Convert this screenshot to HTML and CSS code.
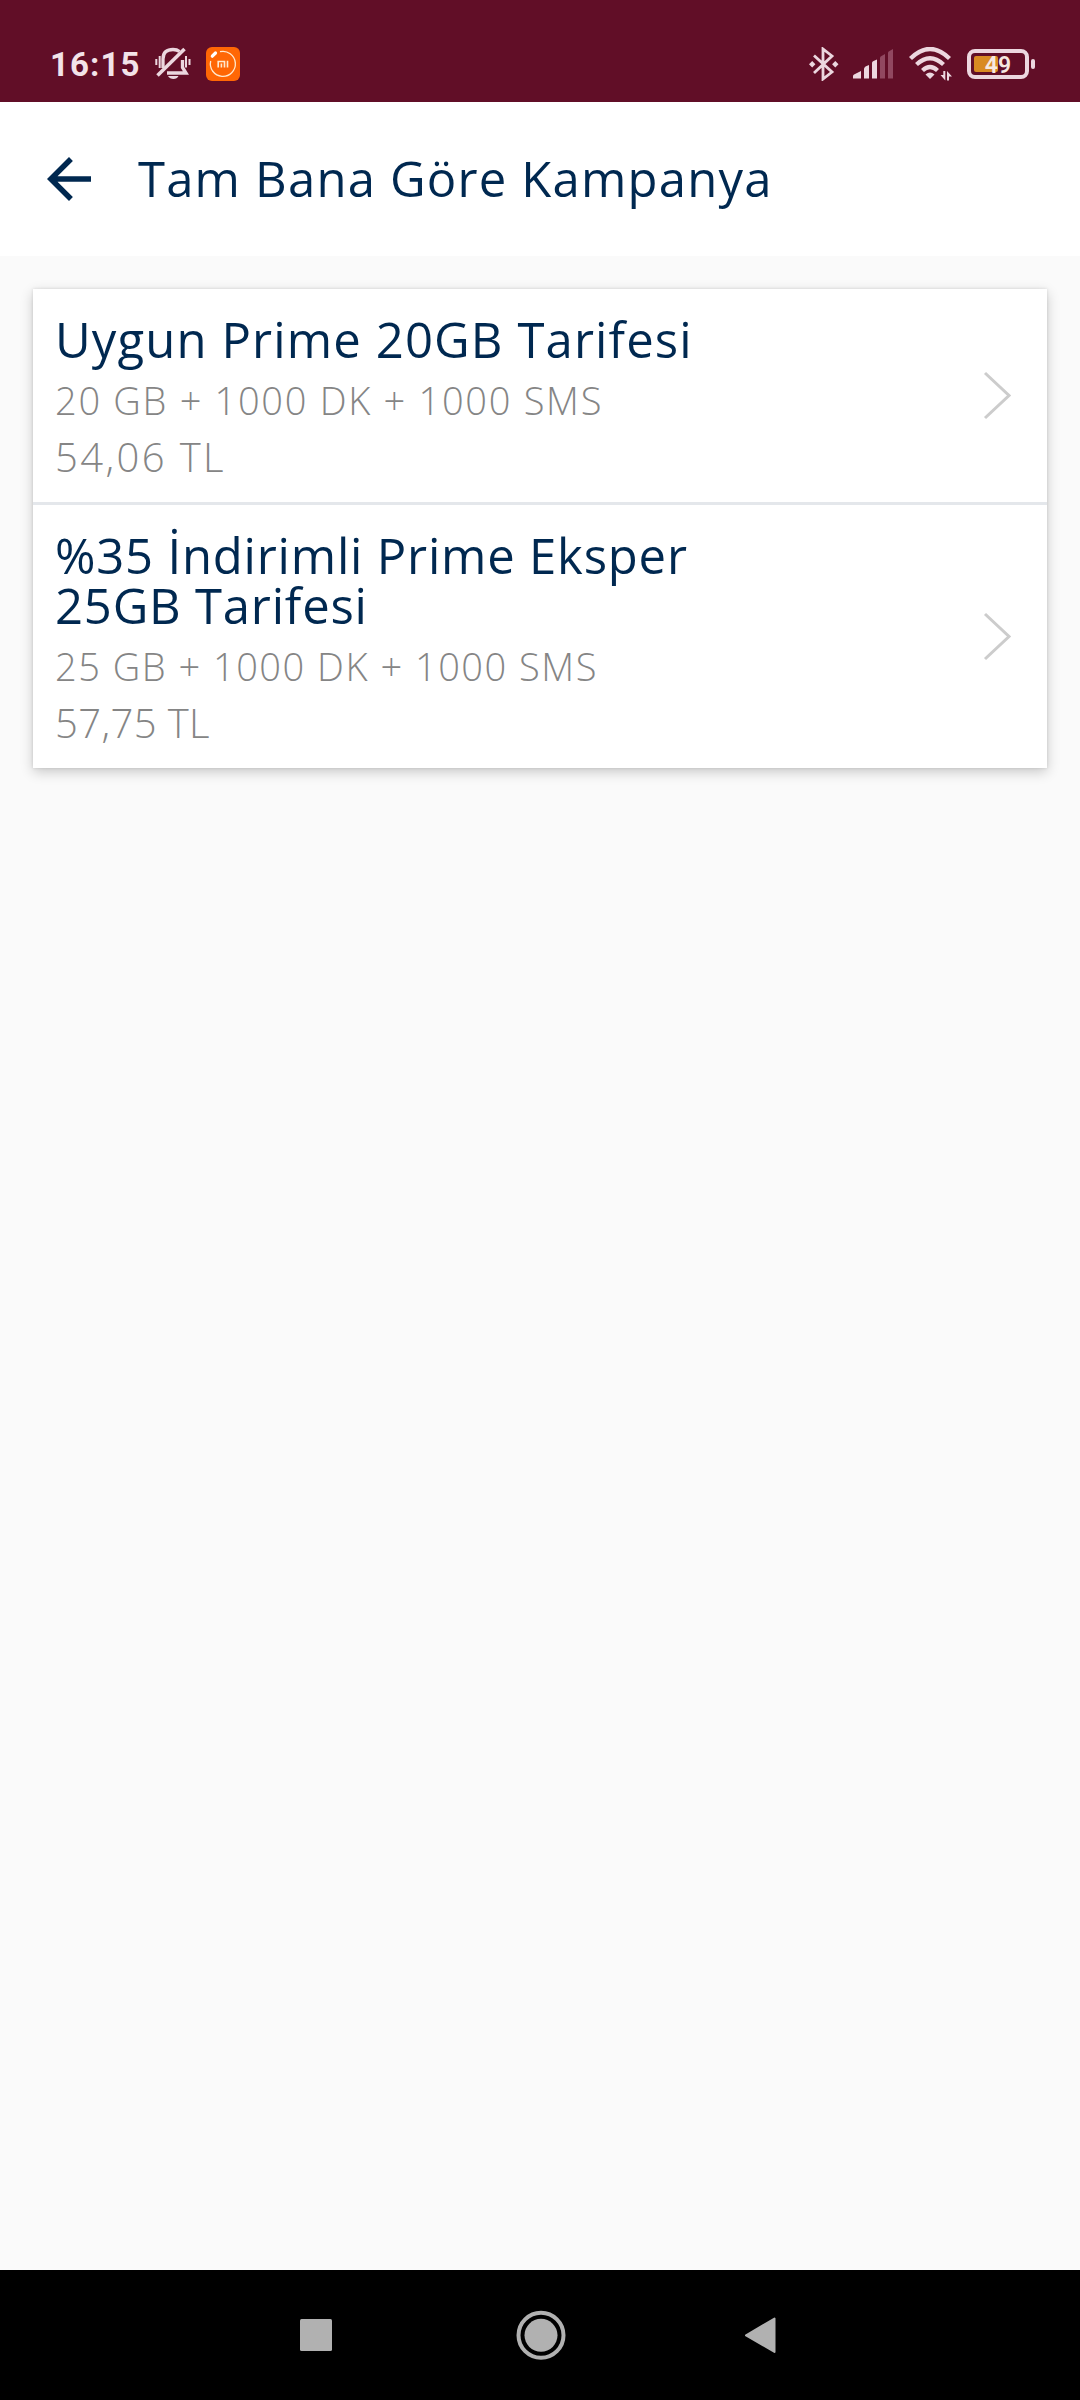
FILE: index.html
```html
<!DOCTYPE html>
<html lang="tr">
<head>
<meta charset="utf-8">
<title>Tam Bana Göre Kampanya</title>
<link rel="stylesheet" href="styles.css">
</head>
<body>
<div class="screen">
  <div class="status-bar">
    <span class="clock">16:15</span>
    <svg class="icon-bell" width="36" height="36" viewBox="0 0 36 36" fill="none" stroke="#ecd7df" stroke-width="3.300">
      <path d="M8 22V13C8 6 12 3.500 18 3.500C21 3.500 23 4.300 24.500 5.500M12 27H31L27.500 21.500V14"/>
      <path d="M2.500 29.500L29.500 3" stroke-width="3.600"/>
      <path d="M13 30H23.500C22 34 15 34 13 30Z" fill="#ecd7df" stroke="none"/>
      <path d="M4.700 10V22M1.300 13V19M31 10V21.500M34.500 13V19" stroke-width="2"/>
    </svg>
    <svg class="icon-mi" width="34" height="34" viewBox="0 0 34 34" fill="none">
      <rect width="34" height="34" rx="6" fill="#ff6705"/>
      <path d="M14 4.700A12.500 12.500 0 1 1 4.700 14" stroke="#ffe9cf" stroke-width="1.300"/>
      <path d="M6.300 9.200L9.500 6" stroke="#fff" stroke-width="3.200" stroke-linecap="round"/>
      <path d="M12.200 20.500V14.500H18.500V20.500M15.400 16.500V20.500M21.500 13.800V20.500" stroke="#ffe9cf" stroke-width="1.600"/>
    </svg>
    <svg class="icon-bluetooth" width="30" height="34" viewBox="0 0 30 34" fill="none" stroke="#ecd7df" stroke-width="2.800">
      <path d="M5 8.500L23 25L14 32V2L23 9L5 26"/>
      <path d="M3.200 14L6.400 17.200L3.200 20.400L0 17.200ZM26.300 14L29.500 17.200L26.300 20.400L23.100 17.200Z" fill="#ecd7df" stroke="none"/>
    </svg>
    <svg class="icon-signal" width="41" height="30" viewBox="0 0 41 30" fill="#ecd7df">
      <path d="M0 29.500V27Q0 26 1 25.500L8 22V29.500ZM11 29.500V20Q11 18.500 12.500 17.500L16 16V29.500ZM19 29.500V14Q19 12.500 20.500 12L24 10.500V29.500Z"/>
      <path d="M27 29.500V9Q27 7.500 28.500 7L32 5V29.500ZM35 29.500V4Q35 2.500 36.500 2L40 0V29.500Z" fill="#914860"/>
    </svg>
    <svg class="icon-wifi" width="43" height="34" viewBox="0 0 43 34" fill="none" stroke="#ecd7df" stroke-width="4.300">
      <path d="M1.500 11.500Q21 -7.500 40.500 11.500M7.500 17.500Q21 5 34.500 17.500M13.500 23.500Q21 16.500 28.500 23.500"/>
      <path d="M16.500 27.500Q21 23.500 25.500 27.500L21 32Z" fill="#ecd7df" stroke="none"/>
      <path d="M34.300 24H36.300V33.500L31.500 28H34.300ZM38 33.500V24L43 29.500H40V33.500Z" fill="#ecd7df" stroke="none"/>
    </svg>
    <div class="battery">
      <div class="battery-body"><div class="battery-level"></div><span class="battery-text">49</span></div>
      <div class="battery-nub"></div>
    </div>
  </div>
  <header class="app-bar">
    <svg class="back" width="66" height="66" viewBox="0 0 24 24" fill="#002850"><path d="M20 11H7.830l5.590-5.590L12 4l-8 8 8 8 1.410-1.410L7.830 13H20v-2z"/></svg>
    <h1 class="title">Tam Bana Göre Kampanya</h1>
  </header>
  <main class="content">
    <div class="card">
      <div class="row">
        <div class="row-text">
          <div class="name name-wide">Uygun Prime 20GB Tarifesi</div>
          <div class="details details-wide">20 GB + 1000 DK + 1000 SMS</div>
          <div class="price price-wide">54,06 TL</div>
        </div>
        <svg class="chevron" width="29" height="49" viewBox="0 0 29 49" fill="none" stroke="#ccc" stroke-width="3"><path d="M2 2L26 24.500L2 47"/></svg>
      </div>
      <div class="row">
        <div class="row-text">
          <div class="name">%35 İndirimli Prime Eksper<br>25GB Tarifesi</div>
          <div class="details">25 GB + 1000 DK + 1000 SMS</div>
          <div class="price">57,75 TL</div>
        </div>
        <svg class="chevron" width="29" height="49" viewBox="0 0 29 49" fill="none" stroke="#ccc" stroke-width="3"><path d="M2 2L26 24.500L2 47"/></svg>
      </div>
    </div>
  </main>
  <nav class="nav-bar">
    <svg width="32" height="32" viewBox="0 0 32 32"><rect width="32" height="32" rx="1.500" fill="#b1b1b1"/></svg>
    <svg class="home" width="50" height="50" viewBox="0 0 50 50" fill="none"><circle cx="25" cy="25.300" r="22.500" stroke="#b1b1b1" stroke-width="4"/><circle cx="25" cy="25.300" r="16.500" fill="#b1b1b1"/></svg>
    <svg width="32" height="38" viewBox="0 0 32 38"><path d="M2 19.300L30.500 2.500V36Z" fill="#b1b1b1" stroke="#b1b1b1" stroke-width="2" stroke-linejoin="round"/></svg>
  </nav>
</div>
</body>
</html>
```
FILE: styles.css
```css
* { box-sizing: border-box; }
body { margin: 0; font-family: "Open Sans", "Noto Sans", sans-serif; }
svg { display: block; flex: none; }
.screen { width: 1080px; height: 2400px; display: flex; flex-direction: column; background: #fafafa; }

.status-bar { height: 102px; flex: none; display: flex; align-items: center; padding: 26px 45px 0 50px; background: #610e27; }
.clock { width: 105px; padding-top: 2px; font: 700 33px/40px Roboto, sans-serif; letter-spacing: 1.1px; color: #f3e3e9; }
.icon-mi { margin-left: 15px; }
.icon-bluetooth { margin-left: auto; }
.icon-signal { margin-left: 14px; }
.icon-wifi { margin-left: 15px; }
.battery { display: flex; align-items: center; gap: 2px; margin-left: 15px; }
.battery-body { position: relative; width: 62px; height: 30px; padding: 3px; border: 4px solid #ecd7df; border-radius: 8px; }
.battery-level { width: 24px; height: 16px; border-radius: 2px; background: #d98a22; }
.battery-text { position: absolute; inset: 0; font: 600 23px/25px Roboto, sans-serif; text-align: center; color: #f6e8e0; }
.battery-nub { width: 4px; height: 10px; border-radius: 2px; background: #ecd7df; }

.app-bar { height: 154px; flex: none; display: flex; align-items: center; padding: 0 36px 0 36px; background: #fff; }
.title { margin: 0 0 2px 36px; font-size: 49px; font-weight: 400; line-height: 60px; letter-spacing: 1.2px; color: #002850; white-space: nowrap; }

.content { flex: 1; padding: 33px; }
.card { background: #fff; box-shadow: 0 4px 12px rgba(0, 0, 0, 0.2), 0 0 3px rgba(0, 0, 0, 0.12); }
.row { display: flex; align-items: center; justify-content: space-between; padding: 25px 35px 17px 22px; }
.row + .row { border-top: 3px solid #e4e7eb; }
.row-text { white-space: nowrap; }
.name { margin-bottom: 8px; font-size: 49px; line-height: 50px; letter-spacing: 0.8px; color: #002850; }
.name-wide { letter-spacing: 1.13px; }
.details { margin-bottom: 1px; font-size: 38px; font-weight: 300; line-height: 56px; letter-spacing: 1.5px; color: #858585; }
.details-wide { letter-spacing: 1.7px; }
.price { font-size: 40px; font-weight: 300; line-height: 56px; letter-spacing: 0.4px; color: #858585; }
.price-wide { letter-spacing: 2.4px; }
.chevron { margin-bottom: 8px; }

.nav-bar { height: 130px; flex: none; display: flex; align-items: center; justify-content: space-between; padding: 0 304px 0 300px; background: #000; }
.home { margin-left: 5px; }
```
